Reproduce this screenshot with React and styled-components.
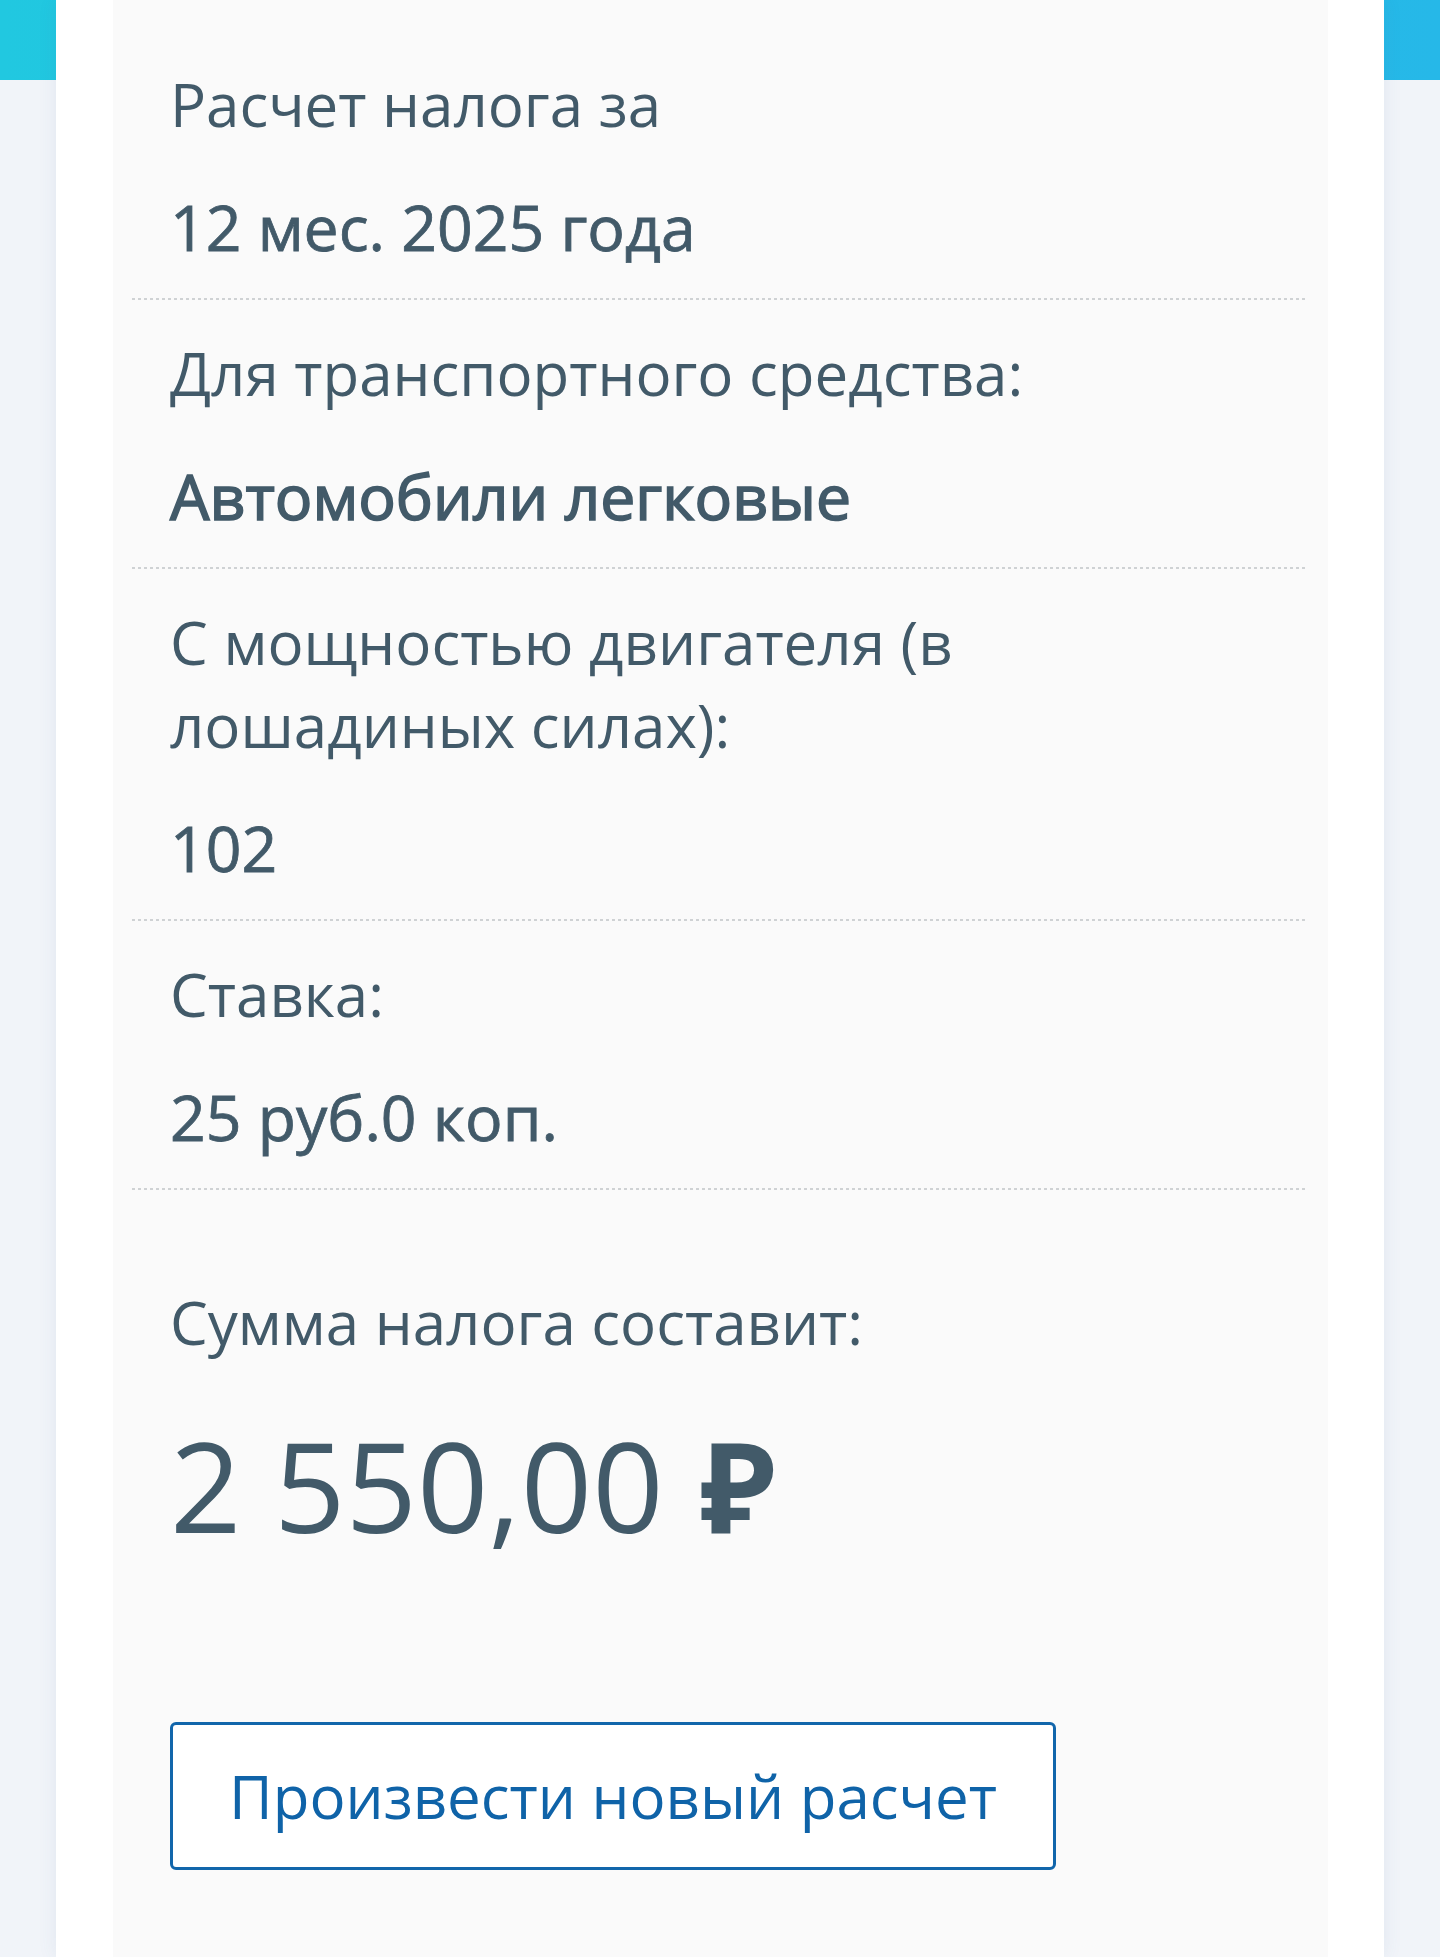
import styled, { createGlobalStyle } from 'styled-components';

const GlobalStyle = createGlobalStyle`
  html, body {
    margin: 0;
    padding: 0;
  }
  body {
    background: #f1f4f9;
    font-family: "Open Sans", "Noto Sans", "Liberation Sans", sans-serif;
    color: #425a69;
  }
`;

const rows = [
  { label: 'Расчет налога за', value: '12 мес. 2025 года' },
  { label: 'Для транспортного средства:', value: 'Автомобили легковые', strong: true },
  { label: 'С мощностью двигателя (в лошадиных силах):', value: '102' },
  { label: 'Ставка:', value: '25 руб.0 коп.' },
];

const App = () => {
  return (
    <>
      <GlobalStyle />
      <Page>
        <Container>
          <Card>
            {rows.map((row) => (
              <Row key={row.label}>
                <Label>{row.label}</Label>
                <Value $strong={row.strong}>{row.value}</Value>
              </Row>
            ))}

            <Summary>
              <Label>Сумма налога составит:</Label>
              <Amount>
                2 550,00 <Ruble>₽</Ruble>
              </Amount>
              <Button type="button">Произвести новый расчет</Button>
            </Summary>
          </Card>
        </Container>
      </Page>
    </>
  );
};

export default App;

const Page = styled.div`
  min-height: 1957px;
  display: flex;
  justify-content: center;
  background:
    linear-gradient(90deg, #21c8e0 0%, #26b8e8 100%) top / 100% 80px no-repeat,
    #f1f4f9;
`;

const Container = styled.main`
  width: 1328px;
  display: flex;
  flex-direction: column;
  background: #ffffff;
  padding: 0 56px 0 57px;
  box-sizing: border-box;
  box-shadow: 0 0 18px rgba(70, 95, 140, 0.09);
`;

const Card = styled.section`
  flex: 1;
  background: #fafafa;
  padding: 31px 21px 0 19px;
  display: flex;
  flex-direction: column;
`;

const Row = styled.div`
  display: flex;
  flex-direction: column;
  gap: 39px;
  padding: 32px 38px;
  background-image: linear-gradient(to right, #cfd2d4 50%, transparent 50%);
  background-size: 6px 2px;
  background-repeat: repeat-x;
  background-position: left bottom;
`;

const Label = styled.div`
  font-size: 60px;
  line-height: 83px;
  font-weight: 400;
  color: #425a69;
`;

/* medium weight is not installed, so regular gets a thin stroke */
const Value = styled.div`
  font-size: 62.5px;
  line-height: 83px;
  font-weight: 400;
  color: #425a69;
  -webkit-text-stroke: ${({ $strong }) => ($strong ? '1.6px' : '0.8px')} #425a69;
`;

const Summary = styled.div`
  display: flex;
  flex-direction: column;
  align-items: flex-start;
  padding: 91px 38px 0;
`;

const Amount = styled.div`
  margin-top: 36px;
  font-size: 125px;
  line-height: 170px;
  font-weight: 400;
  color: #425a69;
  white-space: nowrap;
`;

const Ruble = styled.span`
  margin-left: 4px;
  font-weight: 700;
`;

const Button = styled.button`
  margin-top: 152px;
  height: 148px;
  padding: 0 56px;
  box-sizing: border-box;
  background: #ffffff;
  border: 3px solid #1266ab;
  border-radius: 6px;
  font-family: "Open Sans", "Noto Sans", "Liberation Sans", sans-serif;
  font-size: 60px;
  line-height: 83px;
  font-weight: 400;
  color: #0f63a8;
  cursor: pointer;
`;
